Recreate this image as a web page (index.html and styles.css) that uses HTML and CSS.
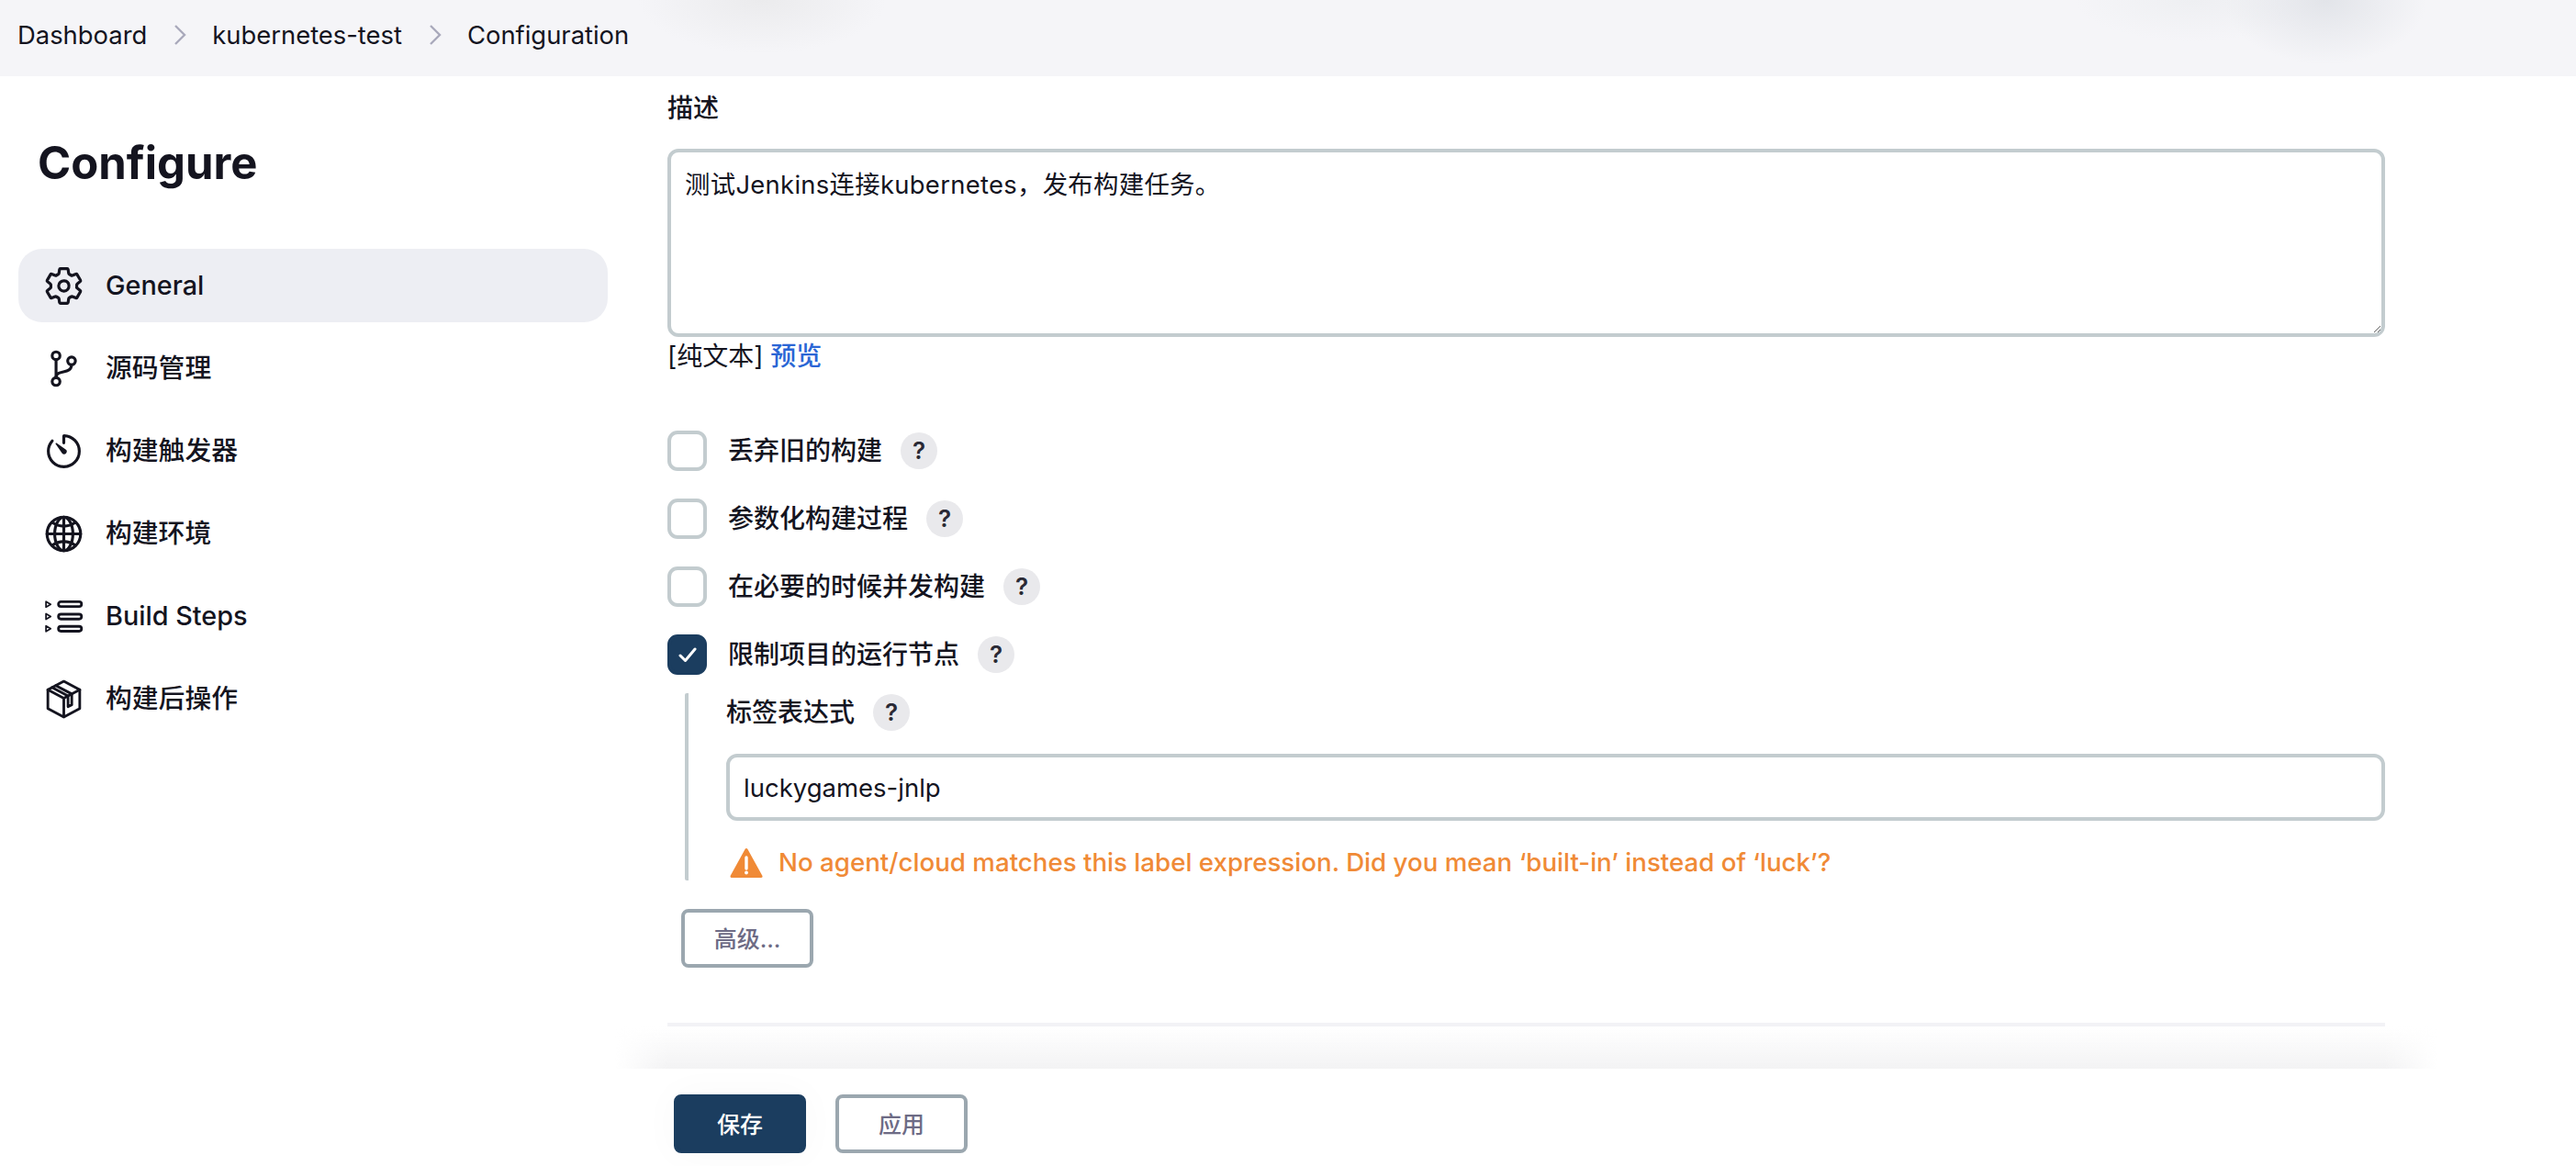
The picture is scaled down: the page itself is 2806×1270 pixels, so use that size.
FILE: index.html
```html
<!DOCTYPE html>
<html lang="zh-CN">
    <head>
        <meta charset="UTF-8" />
        <title>kubernetes-test Config</title>
        <link rel="stylesheet" href="styles.css">
    </head>
    <body>
        <header class="breadcrumbs">
            <a class="crumb">Dashboard</a>
            <svg class="crumb-sep" viewBox="0 0 14 24"><path d="M2 2l10 10L2 22"/></svg>
            <a class="crumb">kubernetes-test</a>
            <svg class="crumb-sep" viewBox="0 0 14 24"><path d="M2 2l10 10L2 22"/></svg>
            <a class="crumb">Configuration</a>
        </header>
        <div class="layout">
            <aside class="sidebar">
                <h1>Configure</h1>
                <nav class="side-nav">
                    <a class="side-item active">
                        <svg class="side-icon" viewBox="0 0 512 512"><path d="M262.29 192.31a64 64 0 1057.4 57.4 64.13 64.13 0 00-57.4-57.4zM416.39 256a154.34 154.34 0 01-1.53 20.79l45.21 35.46a10.81 10.81 0 012.45 13.75l-42.77 74a10.81 10.81 0 01-13.14 4.59l-44.9-18.08a16.11 16.11 0 00-15.17 1.75A164.48 164.48 0 01325 400.8a15.94 15.94 0 00-8.82 12.14l-6.73 47.89a11.08 11.08 0 01-10.68 9.17h-85.54a11.11 11.11 0 01-10.69-8.87l-6.72-47.82a16.07 16.07 0 00-9-12.22 155.3 155.3 0 01-21.46-12.57 16 16 0 00-15.11-1.71l-44.89 18.07a10.81 10.81 0 01-13.14-4.58l-42.77-74a10.8 10.8 0 012.45-13.75l38.21-30a16.05 16.05 0 006-14.08c-.36-4.17-.58-8.33-.58-12.5s.21-8.27.58-12.35a16 16 0 00-6.07-13.94l-38.19-30A10.81 10.81 0 0149.48 186l42.77-74a10.81 10.81 0 0113.14-4.59l44.9 18.08a16.11 16.11 0 0015.17-1.75A164.48 164.48 0 01187 111.2a15.94 15.94 0 008.82-12.14l6.73-47.89A11.08 11.08 0 01213.23 42h85.54a11.11 11.11 0 0110.69 8.87l6.72 47.82a16.07 16.07 0 009 12.22 155.3 155.3 0 0121.46 12.57 16 16 0 0015.11 1.71l44.89-18.07a10.81 10.81 0 0113.14 4.58l42.77 74a10.8 10.8 0 01-2.45 13.75l-38.21 30a16.05 16.05 0 00-6.05 14.08c.33 4.14.55 8.3.55 12.47z"/></svg>
                        General
                    </a>
                    <a class="side-item">
                        <svg class="side-icon" viewBox="0 0 512 512"><circle cx="160" cy="96" r="48"/><circle cx="160" cy="416" r="48"/><path d="M160 368V144"/><circle cx="352" cy="160" r="48"/><path d="M352 208c0 128-192 48-192 160"/></svg>
                        源码管理
                    </a>
                    <a class="side-item">
                        <svg class="side-icon" viewBox="0 0 512 512"><path d="M112.91 128A191.85 191.85 0 0064 254c-1.18 106.35 85.65 193.8 192 194 106.2.2 192-85.83 192-192 0-104.54-83.55-189.61-187.5-192a4.36 4.36 0 00-4.5 4.37V152"/><path class="solid" d="M233.38 278.63l-79-113a8.13 8.13 0 0111.32-11.32l113 79a32.5 32.5 0 01-37.25 53.26 33.21 33.21 0 01-8.07-7.94z"/></svg>
                        构建触发器
                    </a>
                    <a class="side-item">
                        <svg class="side-icon" viewBox="0 0 512 512"><path d="M256 48C141.13 48 48 141.13 48 256s93.13 208 208 208 208-93.13 208-208S370.87 48 256 48z"/><path d="M256 48c-58.07 0-112.67 93.13-112.67 208S197.93 464 256 464s112.67-93.13 112.67-208S314.07 48 256 48z"/><path d="M117.33 117.33c38.24 27.15 86.38 43.34 138.67 43.34s100.43-16.19 138.67-43.34M394.67 394.67c-38.24-27.15-86.38-43.34-138.67-43.34s-100.43 16.19-138.67 43.34"/><path d="M256 48v416M464 256H48"/></svg>
                        构建环境
                    </a>
                    <a class="side-item">
                        <svg class="side-icon thin" viewBox="0 0 48 48"><rect x="18.300" y="8.200" width="24.600" height="5.200" rx="2.600"/><rect x="18.300" y="21.500" width="24.600" height="5.200" rx="2.600"/><rect x="18.300" y="34.500" width="24.600" height="5.200" rx="2.600"/><path class="tri" d="M5 8v6l5-3zM5 21v6l5-3zM5 34v6l5-3z"/></svg>
                        Build Steps
                    </a>
                    <a class="side-item">
                        <svg class="side-icon thin" viewBox="0 0 48 48"><path d="M24 5l17 9v20l-17 9-17-9V14z"/><path d="M7 14l17 9 17-9M24 23v20"/><path d="M15.500 9.500l17 9V30l-4 2V20.500l-17-9"/></svg>
                        构建后操作
                    </a>
                </nav>
            </aside>
            <main class="content">
                <label class="field-label">描述</label>
                <textarea class="text-box description">测试Jenkins连接kubernetes，发布构建任务。</textarea>
                <div class="preview-row">[纯文本] <a class="link">预览</a></div>

                <div class="options">
                    <div class="option">
                        <span class="checkbox"></span>
                        <span class="option-label">丢弃旧的构建</span>
                        <span class="help">?</span>
                    </div>
                    <div class="option">
                        <span class="checkbox"></span>
                        <span class="option-label">参数化构建过程</span>
                        <span class="help">?</span>
                    </div>
                    <div class="option">
                        <span class="checkbox"></span>
                        <span class="option-label">在必要的时候并发构建</span>
                        <span class="help">?</span>
                    </div>
                    <div class="option">
                        <span class="checkbox checked">
                            <svg viewBox="0 0 20 16"><path d="M2 9l5.500 5.500L18 2"/></svg>
                        </span>
                        <span class="option-label">限制项目的运行节点</span>
                        <span class="help">?</span>
                    </div>
                </div>

                <div class="nested">
                    <div class="nested-label">
                        <span class="option-label">标签表达式</span>
                        <span class="help">?</span>
                    </div>
                    <input class="text-box label-input" type="text" value="luckygames-jnlp" />
                    <div class="warning">
                        <svg viewBox="0 0 36 34"><path class="warn-bg" d="M18 2.500L34 31.500H2z"/><path class="warn-mark" d="M18 11v12"/><circle class="warn-dot" cx="18" cy="27.500" r="1.900"/></svg>
                        No agent/cloud matches this label expression. Did you mean ‘built-in’ instead of ‘luck’?
                    </div>
                </div>

                <button class="btn advanced">高级...</button>
                <div class="divider"></div>

                <footer class="save-bar">
                    <button class="btn primary">保存</button>
                    <button class="btn">应用</button>
                </footer>
            </main>
        </div>
    </body>
</html>
```

FILE: styles.css
```css
* {
    box-sizing: border-box;
}
html, body {
    height: 100%;
}
body {
    margin: 0;
    height: 1270px;
    overflow: hidden;
    background: #fff;
    color: #14141f;
    font-family: Inter, "Noto Sans CJK SC", sans-serif;
    font-size: 28px;
    line-height: 38px;
}
.breadcrumbs {
    display: flex;
    align-items: center;
    height: 83px;
    padding: 0 0 7px 19px;
    background-color: #f5f5f8;
    background-image:
        radial-gradient(ellipse 110px 70px at 2533px 0, #e2e4e9, rgba(226, 228, 233, 0) 100%),
        radial-gradient(ellipse 130px 45px at 2390px 0, #eeeff2, rgba(238, 239, 242, 0) 100%),
        radial-gradient(ellipse 135px 58px at 830px 0, #ebebed, rgba(235, 235, 237, 0) 100%);
    font-size: 27.4px;
}
.crumb-sep {
    width: 14px;
    height: 24px;
    margin: 0 28px 0 29px;
    fill: none;
    stroke: #a9a9bb;
    stroke-width: 2.4;
}
.layout {
    display: flex;
    height: 1187px;
}
.sidebar {
    flex: none;
    width: 727px;
    padding: 65px 0 0 20px;
}
.sidebar h1 {
    margin: 0 0 63px 21px;
    font-size: 49px;
    font-weight: 700;
    line-height: 60px;
}
.side-nav {
    display: flex;
    flex-direction: column;
    gap: 10px;
    width: 642px;
}
.side-item {
    display: flex;
    align-items: center;
    gap: 23.5px;
    height: 80px;
    padding-left: 26.5px;
    border-radius: 26px;
    font-size: 28.8px;
    font-weight: 450;
}
.side-item.active {
    background: #edeef3;
}
.side-icon {
    flex: none;
    width: 45px;
    height: 45px;
    fill: none;
    stroke: #14141f;
    stroke-width: 36;
    stroke-linecap: round;
    stroke-linejoin: round;
}
.side-icon.thin {
    width: 49px;
    height: 49px;
    margin: 0 -2px;
    stroke-width: 2.8;
}
.side-icon .tri {
    stroke-width: 1.7;
}
.side-icon .solid {
    fill: #14141f;
    stroke: none;
}
.content {
    flex: none;
    width: 1871px;
    padding-top: 16px;
}
.field-label {
    display: block;
    font-weight: 450;
}
.text-box {
    display: block;
    width: 100%;
    border: 4px solid #c3cccf;
    border-radius: 12px;
    background: #fff;
    color: #14141f;
    font: inherit;
    outline: none;
}
.description {
    height: 205px;
    margin-top: 25px;
    padding: 16px 15px;
    font-size: 27.4px;
    letter-spacing: 0.3px;
}
.preview-row {
    margin-top: 2px;
}
.link {
    color: #2b66d5;
    font-weight: 500;
}
.options {
    display: flex;
    flex-direction: column;
    gap: 30px;
    margin-top: 62px;
}
.option {
    display: flex;
    align-items: center;
    height: 44px;
}
.checkbox {
    display: flex;
    flex: none;
    align-items: center;
    justify-content: center;
    width: 43px;
    height: 44px;
    margin-right: 23px;
    border: 4px solid #c3cccf;
    border-radius: 11px;
}
.checkbox.checked {
    border-color: #1b3d5f;
    background: #1b3d5f;
}
.checkbox svg {
    width: 20px;
    height: 16px;
    fill: none;
    stroke: #fff;
    stroke-width: 3;
    stroke-linecap: round;
    stroke-linejoin: round;
}
.option-label {
    font-weight: 450;
}
.help {
    display: flex;
    flex: none;
    align-items: center;
    justify-content: center;
    width: 40px;
    height: 40px;
    margin-left: 20px;
    border-radius: 50%;
    background: #e9e9ec;
    color: #2a2a35;
    font-size: 26px;
    font-weight: 600;
}
.nested {
    margin: 20px 0 0 19px;
    padding: 1px 0 3px 41px;
    border-left: 4px solid #c3cccf;
    border-radius: 2px;
}
.nested-label {
    display: flex;
    align-items: center;
    height: 40px;
}
.label-input {
    height: 73px;
    margin-top: 25px;
    padding: 0 15px;
    font-size: 27.5px;
}
.warning {
    display: flex;
    align-items: center;
    gap: 17px;
    height: 34px;
    margin-top: 28px;
    padding-left: 4px;
    color: #f08a36;
    font-size: 27.7px;
    font-weight: 450;
}
.warning svg {
    flex: none;
    width: 36px;
    height: 34px;
    margin-top: 2px;
}
.warn-bg {
    fill: #f08a36;
    stroke: #f08a36;
    stroke-width: 3;
    stroke-linejoin: round;
}
.warn-mark {
    fill: none;
    stroke: #fff;
    stroke-width: 3.4;
    stroke-linecap: round;
}
.warn-dot {
    fill: #fff;
}
.btn {
    width: 144px;
    height: 64px;
    padding: 0 0 2px;
    border: 4px solid #9ba7af;
    border-radius: 8px;
    background: #fff;
    color: #6d6b85;
    font-family: inherit;
    font-size: 25px;
    font-weight: 500;
}
.btn.advanced {
    display: block;
    margin: 31px 0 0 15px;
}
.btn.primary {
    border-color: #1b3d5f;
    background: #1b3d5f;
    color: #fff;
    box-shadow: 0 0 40px rgba(0, 0, 0, 0.03);
}
.divider {
    height: 4px;
    margin-top: 60px;
    background: #f2f2f6;
}
.save-bar {
    position: relative;
    display: flex;
    gap: 32px;
    margin-top: 46px;
    padding: 28px 0 0 7px;
}
/* soft fade that sits over the page just above the sticky bar */
.save-bar::before {
    content: "";
    position: absolute;
    top: -46px;
    left: -57px;
    right: -57px;
    height: 46px;
    background: linear-gradient(to bottom, rgba(243, 243, 244, 0), #f3f3f4);
    -webkit-mask-image: linear-gradient(to right, transparent, #000 57px, #000 calc(100% - 57px), transparent);
    mask-image: linear-gradient(to right, transparent, #000 57px, #000 calc(100% - 57px), transparent);
}
```
